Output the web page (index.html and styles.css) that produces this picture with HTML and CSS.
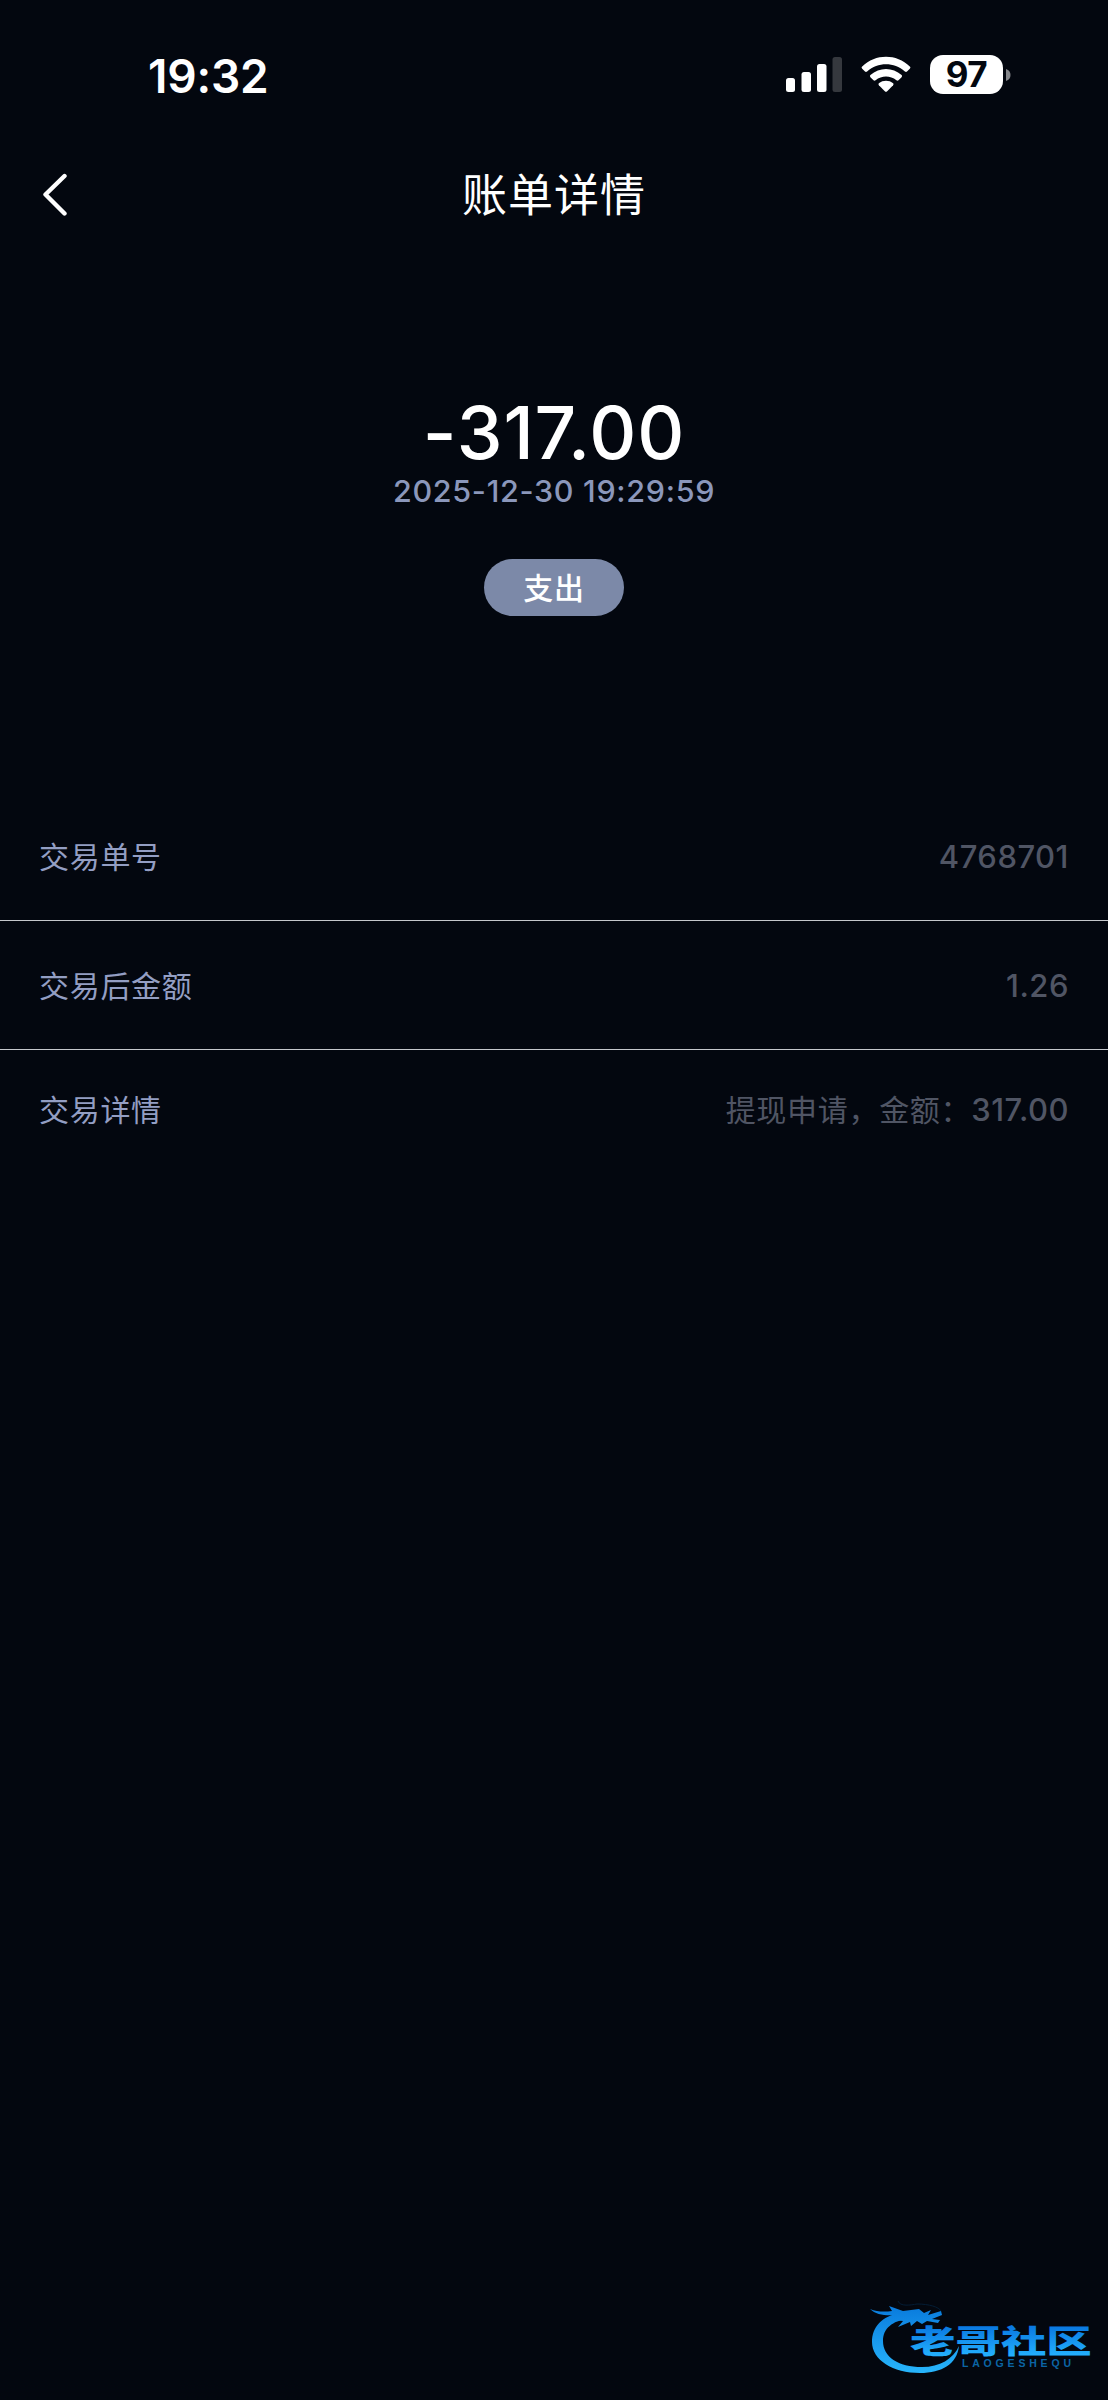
FILE: index.html
```html
<!DOCTYPE html>
<html lang="zh-CN">
<head>
    <meta charset="UTF-8">
    <title>账单详情</title>
    <link rel="stylesheet" href="styles.css">
</head>
<body>
    <div class="status-bar">
        <span class="time">19:32</span>
        <div class="status-icons">
            <svg class="signal" width="56" height="36" viewBox="0 0 56 36">
                <rect x="0" y="22" width="9" height="14" rx="2.5" fill="#fff"/>
                <rect x="15.5" y="16" width="9.5" height="20" rx="2.5" fill="#fff"/>
                <rect x="31" y="8" width="9.5" height="28" rx="2.5" fill="#fff"/>
                <rect x="46.5" y="1" width="9.5" height="35" rx="2.5" fill="#35383e"/>
            </svg>
            <svg class="wifi" width="50" height="37" viewBox="0 0 50 37">
                <path d="M1.2 10.4Q0 11.6 1.2 12.8L4 15.6Q5 16.4 6.1 15.5C17 5.8 33 5.8 43.9 15.5Q45 16.4 46 15.6L48.8 12.8Q50 11.6 48.8 10.4C35.5-2.5 14.5-2.5 1.2 10.4Z" fill="#fff"/>
                <path d="M9.4 19.1Q8.4 20.2 9.4 21.2L12.5 24.3Q13.5 25.1 14.6 24.2C20.7 19.2 29.3 19.2 35.4 24.2Q36.5 25.1 37.5 24.3L40.6 21.2Q41.6 20.2 40.6 19.1C31.5 10.8 18.5 10.8 9.4 19.1Z" fill="#fff"/>
                <path d="M17.8 27.3Q17 28.3 17.9 29.3L23.8 35.3Q25 36.4 26.2 35.3L32.1 29.3Q33 28.3 32.2 27.3C28 24 22 24 17.8 27.3Z" fill="#fff"/>
            </svg>
            <div class="battery">
                <span class="battery-level">97</span>
                <svg width="5" height="12" viewBox="0 0 5 12">
                    <path d="M0 0C6 1.5 6 10.5 0 12Z" fill="#85878b"/>
                </svg>
            </div>
        </div>
    </div>

    <div class="nav-bar">
        <svg class="back" width="26" height="44" viewBox="0 0 26 44">
            <path d="M22.5 3L3.5 21.5L22.5 40.5" fill="none" stroke="#fff" stroke-width="4.4" stroke-linecap="round" stroke-linejoin="round"/>
        </svg>
        <h1>账单详情</h1>
    </div>

    <div class="summary">
        <div class="amount">-317.00</div>
        <div class="date">2025-12-30 19:29:59</div>
        <div class="tag">支出</div>
    </div>

    <div class="detail-list">
        <div class="row">
            <span class="label">交易单号</span>
            <span class="value"><span class="number">4768701</span></span>
        </div>
        <div class="row">
            <span class="label">交易后金额</span>
            <span class="value"><span class="number">1.26</span></span>
        </div>
        <div class="row last">
            <span class="label">交易详情</span>
            <span class="value">提现申请，金额：<span class="number">317.00</span></span>
        </div>
    </div>

    <!-- Community logo -->
    <div class="footer">
        <svg width="230" height="84" viewBox="0 0 230 84">
            <defs>
                <linearGradient id="ring" x1="0" y1="10" x2="0" y2="78" gradientUnits="userSpaceOnUse">
                    <stop offset="0" stop-color="#0879dc"/>
                    <stop offset="1" stop-color="#27b4fb"/>
                </linearGradient>
                <linearGradient id="word" x1="0" y1="0" x2="0" y2="1">
                    <stop offset="0.2" stop-color="#0875df"/>
                    <stop offset="0.9" stop-color="#25b3ff"/>
                </linearGradient>
            </defs>
            <path d="M31 19C13 22 3 33 3 48C3 66 24 79 51 79C73 79 88 70 90 52C84 65 71 73 53 73C29 73 14 63 14 47C14 34 24 27 38 25Z" fill="url(#ring)"/>
            <path d="M1 15C8 18 16 18 23 17L20 12L34 17L50 15L55 19L62 16L59 21L72 17L73 21L63 25L71 26L69 29L58 27L53 30L48 27L42 32L41 28L29 33L34 27L25 26L28 21C17 22 7 21 1 15Z" fill="url(#ring)"/>
            <path d="M29 7C31 13 42 11 48 10C60 10 70 13 72 17" fill="none" stroke="#041d35" stroke-width="1"/>
            <text class="logo-name" transform="translate(41 59) scale(1.42 1)" textLength="128" fill="url(#word)">老哥社区</text>
            <text class="logo-latin" x="93" y="73" textLength="109">LAOGESHEQU</text>
        </svg>
    </div>
</body>
</html>
```

FILE: styles.css
```css
* {
    box-sizing: border-box;
}

body {
    margin: 0;
    height: 2400px;
    display: flex;
    flex-direction: column;
    background-color: #03070f;
    color: #fff;
    font-family: Inter, "Noto Sans CJK SC", sans-serif;
}

.status-bar {
    display: flex;
    justify-content: space-between;
    height: 150px;
    padding: 47px 97px 0 148px;
}

.time {
    padding-top: 1px;
    font-size: 46px;
    font-weight: 600;
    line-height: 56px;
    letter-spacing: -0.2px;
}

.status-icons {
    display: flex;
    align-items: flex-start;
    padding-top: 8px;
}

.signal {
    margin: 1px 19px 0 0;
}

.wifi {
    margin: 1px 19px 0 0;
}

.battery {
    display: flex;
    align-items: center;
    gap: 3px;
}

.battery-level {
    width: 73px;
    height: 39px;
    border-radius: 13px;
    background-color: #fff;
    color: #03070f;
    font-size: 35px;
    font-weight: 700;
    line-height: 39px;
    letter-spacing: -0.5px;
    text-align: center;
}

.nav-bar {
    display: grid;
    grid-template-columns: 60px 1fr 60px;
    align-items: center;
    height: 90px;
    padding: 0 42px;
}

h1 {
    margin: 0;
    padding-top: 2px;
    font-size: 45px;
    font-weight: 400;
    line-height: 60px;
    letter-spacing: 1px;
    text-align: center;
}

.summary {
    display: flex;
    flex-direction: column;
    align-items: center;
    padding-top: 153px;
}

.amount {
    font-size: 73px;
    font-weight: 500;
    line-height: 80px;
    letter-spacing: 0.9px;
}

.date {
    color: #8b97bb;
    font-size: 30.5px;
    font-weight: 500;
    line-height: 36px;
    letter-spacing: 0.7px;
}

.tag {
    width: 140px;
    height: 57px;
    margin-top: 50px;
    border-radius: 29px;
    background-color: #7c89a8;
    font-size: 30px;
    font-weight: 500;
    line-height: 58px;
    letter-spacing: 0.7px;
    text-align: center;
}

.detail-list {
    margin-top: 176px;
}

.row {
    display: flex;
    justify-content: space-between;
    align-items: center;
    height: 129px;
    padding: 0 39px;
    border-bottom: 1px solid #c5c8cc;
    font-size: 30px;
    line-height: 40px;
    letter-spacing: 0.7px;
}

.row.last {
    height: 119px;
    border-bottom: none;
}

.label {
    padding-top: 1px;
    color: #939ec3;
}

.value {
    padding-top: 1px;
    color: #505564;
}

.number {
    font-size: 31px;
    font-weight: 500;
    letter-spacing: 0.5px;
}

.footer {
    display: flex;
    justify-content: flex-end;
    margin-top: auto;
    padding: 0 9px 22px 0;
}

.logo-name {
    font-family: "Noto Sans CJK SC", sans-serif;
    font-size: 32px;
    font-weight: 900;
}

.logo-latin {
    fill: #0b65a5;
    font-family: "Liberation Sans", sans-serif;
    font-size: 10.5px;
    font-weight: 700;
}
```
